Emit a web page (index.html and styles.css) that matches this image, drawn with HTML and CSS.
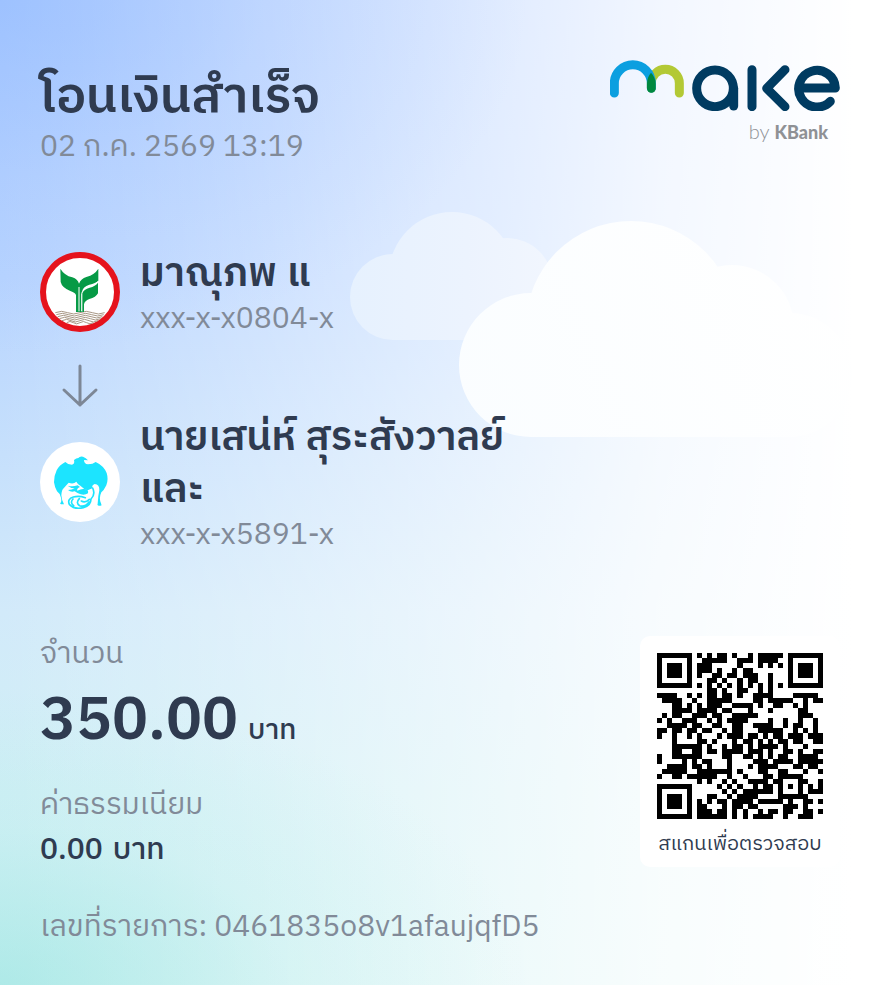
FILE: index.html
```html
<!DOCTYPE html>
<html lang="th">
<head>
<meta charset="utf-8">
<meta name="viewport" content="width=device-width, initial-scale=1">
<title>โอนเงินสำเร็จ</title>
<link rel="stylesheet" href="styles.css">
</head>
<body>
<main class="slip">
  <svg class="clouds" viewBox="0 0 530 240" aria-hidden="true">
    <defs>
      <linearGradient id="far" gradientUnits="userSpaceOnUse" x1="0" y1="0" x2="260" y2="0">
        <stop offset="0" stop-color="#e6f1fe"/><stop offset="0.45" stop-color="#ecf3fe"/><stop offset="0.75" stop-color="#f1f6fe"/><stop offset="1" stop-color="#f8faff" stop-opacity="0"/>
      </linearGradient>
      <linearGradient id="near" gradientUnits="userSpaceOnUse" x1="109" y1="240" x2="510" y2="60">
        <stop offset="0" stop-color="#fafdff"/><stop offset="1" stop-color="#fff"/>
      </linearGradient>
    </defs>
    <g fill="url(#far)">
      <circle cx="43" cy="87" r="43"/>
      <circle cx="102" cy="65" r="63"/>
      <circle cx="157" cy="74" r="46"/>
      <path d="M43 80H240V130H43z"/>
    </g>
    <g fill="url(#near)">
      <circle cx="181" cy="155" r="72"/>
      <circle cx="281" cy="116" r="105"/>
      <circle cx="382" cy="117" r="62"/>
      <circle cx="440" cy="165" r="62"/>
      <path d="M181 110H440V227H181z"/>
    </g>
  </svg>

  <header class="top">
    <div>
      <h1 class="title">โอนเงินสำเร็จ</h1>
      <p class="muted">02 ก.ค. 2569 13:19</p>
    </div>
    <div class="brand">
      <svg class="brand-mark" viewBox="30 28 690 154" role="img" aria-label="make" fill="none" stroke-width="27" stroke-linecap="round" stroke-linejoin="round">
        <path stroke="#b3c935" d="M154 112V98a42 42 0 0 1 84 0V127"/>
        <path stroke="#0b9fe0" d="M43 127V98a55 55 0 0 1 111 0V112"/>
        <path fill="#00883f" d="M153 66c8 9 14 20 14 33v14a13 13 0 0 1-26 0V98c0-13 5-24 12-32z"/>
        <g stroke="#003b61">
          <circle cx="345" cy="113" r="55"/>
          <path d="M401 113V166"/>
          <path d="M456 57V168M555 57L500 113L555 168"/>
          <path d="M600 112H706A55 55 0 1 0 691 152"/>
        </g>
      </svg>
      <p class="brand-by">by <b>KBank</b></p>
    </div>
  </header>

  <section class="party from">
    <svg class="avatar" viewBox="30 33 240 240" role="img" aria-label="KBank">
      <circle cx="150" cy="153" r="111" fill="#fff" stroke="#e5131d" stroke-width="18"/>
      <g fill="none" stroke="#a89886" stroke-width="3">
        <path d="M76 215q19-8 37 0t37 0t37 0t37 0M79 221q18-8 36 0t35 0t35 0t36 0M83 227q17-8 34 0t33 0t33 0t34 0M88 233q16-8 31 0t31 0t31 0t31 0M96 239q14-8 27 0t27 0t27 0t27 0M110 245q10-7 20 0t20 0t20 0t20 0"/>
      </g>
      <g fill="#069a46">
        <path d="M91 83Q103 103 127 109Q143 114 147 128Q153 113 169 108Q194 101 205 83V119Q197 127 178 131Q158 137 157 151V213H138V163Q137 155 121 150Q96 140 92 123Z"/>
        <path d="M204 125V157Q198 169 178 174Q164 179 162 190V213H157V157Q161 145 179 140Q196 136 204 125Z"/>
      </g>
      <path fill="none" stroke="#fff" stroke-width="3" d="M147 138V211M155 211V158Q158 144 176 137Q196 132 205 121"/>
    </svg>
    <div class="who">
      <h2 class="name">มาณุภพ แ</h2>
      <p class="muted">xxx-x-x0804-x</p>
    </div>
  </section>

  <svg class="arrow" viewBox="0 0 80 44" aria-hidden="true"><path d="M40 2V41M24 26L40 41L56 26"/></svg>

  <section class="party to">
    <svg class="avatar" viewBox="30 270 240 240" role="img" aria-label="Krungthai">
      <circle cx="150" cy="390" r="120" fill="#fff"/>
      <g fill="#1ce4ff">
        <path d="M132 324Q139 318 145 318Q149 312 159 314Q168 317 174 325L162 324Q162 336 174 337Q189 337 197 330Q221 341 230 363Q236 382 229 400Q222 415 214 421Q205 440 214 457Q217 463 206 461Q200 460 203 455Q204 432 208 415Q209 397 194 396Q185 399 187 409L173 415Q160 411 152 402Q142 396 139 389Q130 398 116 392Q110 398 101 409Q95 414 94 430Q95 445 102 457L93 457L90 454Q96 450 93 437Q90 424 81 418Q74 406 72 391Q72 371 80 355Q88 339 106 330Q113 338 126 338Q135 336 132 324Z"/>
        <path d="M113 401Q128 405 143 400L150 405Q139 410 142 416Q154 410 162 411Q177 411 174 424Q165 430 152 427Q142 424 134 418Q123 422 114 414Q126 414 134 409Q122 409 113 401Z"/>
      </g>
      <path fill="none" stroke="#1ce4ff" stroke-width="5" stroke-linecap="round" d="M188 408Q197 427 183 441Q183 461 160 467Q132 473 118 457Q111 441 130 435Q147 430 166 437M129 441Q119 452 131 461M148 440Q136 453 149 461Q164 467 177 450M154 447Q166 454 178 442"/>
    </svg>
    <div class="who">
      <h2 class="name">นายเสน่ห์ สุระสังวาลย์ และ</h2>
      <p class="muted">xxx-x-x5891-x</p>
    </div>
  </section>

  <section class="bottom">
    <dl class="amounts">
      <dt class="muted">จำนวน</dt>
      <dd class="total"><span class="total-value">350.00</span> <span class="unit">บาท</span></dd>
      <dt class="muted">ค่าธรรมเนียม</dt>
      <dd class="fee"><span>0.00</span> <span>บาท</span></dd>
    </dl>
    <figure class="verify">
      <svg class="qr" viewBox="0 0 33 33" role="img" aria-label="QR" shape-rendering="crispEdges"><path id="modules"/></svg>
      <figcaption>สแกนเพื่อตรวจสอบ</figcaption>
    </figure>
  </section>

  <p class="muted ref">เลขที่รายการ: 0461835o8v1afaujqfD5</p>
</main>
<script src="qr.js"></script>
</body>
</html>
```
FILE: styles.css
```css
* { box-sizing: border-box; }

body, h1, h2, p, dl, dd, figure { margin: 0; }

body {
  font-family: "IBM Plex Sans Thai", "IBM Plex Sans", "Noto Sans", "Noto Sans Thai", sans-serif;
  color: #2f3b50;
}

.slip {
  position: relative;
  min-height: 100vh;
  padding: 64px 40px 40px;
  background:
    radial-gradient(ellipse 60% 36% at 0 0, rgba(140, 184, 255, 0.5), rgba(150, 190, 255, 0.2) 50%, rgba(160, 200, 255, 0)),
    radial-gradient(ellipse 60% 30% at 0 100%, rgba(150, 228, 224, 0.6), rgba(170, 235, 232, 0.2) 55%, rgba(190, 240, 238, 0)),
    linear-gradient(to right, rgba(255, 255, 255, 0), rgba(255, 255, 255, 0.26) 25%, rgba(255, 255, 255, 0.54) 50%, rgba(255, 255, 255, 0.84) 75%, #fff 97%),
    linear-gradient(#b0ccff, #b8d4ff 28%, #c6e0fc 46%, #d2eafa 62%, #d0eff5 80%, #d2f2f3);
}

.clouds {
  position: absolute;
  top: 210px;
  left: 350px;
  width: 530px;
}

.top, .party, .bottom { position: relative; display: flex; }

.top { justify-content: space-between; align-items: flex-start; }

.title { font-size: 50px; font-weight: 600; line-height: 68px; }

.muted { color: #818a98; font-size: 30px; line-height: 38px; }

.top .muted { line-height: 32px; }

.brand { width: 230px; margin-top: -4px; }

.brand-mark { display: block; width: 100%; }

.brand-by {
  padding: 7px 12px 0 0;
  color: #8f9195;
  font: 300 20px/26px Lato, sans-serif;
  text-align: right;
}

.brand-by b { font-weight: 900; font-size: 18px; }

.party { gap: 20px; align-items: center; }

.from { margin-top: 80px; }

.avatar { flex: none; width: 80px; height: 80px; }

.who { max-width: 400px; padding-top: 4px; }

.name { font-size: 40px; font-weight: 600; line-height: 52px; }

.who .muted { line-height: 40px; }

.arrow {
  position: relative;
  display: block;
  width: 80px;
  height: 44px;
  margin: 24px 0 0;
  fill: none;
  stroke: #7d8796;
  stroke-width: 3;
  stroke-linecap: round;
  stroke-linejoin: round;
}

.bottom { justify-content: space-between; align-items: flex-start; margin-top: 80px; }

.total { display: flex; align-items: baseline; gap: 10px; line-height: 96px; }

.total-value { font-size: 60px; font-weight: 600; }

.unit { font-size: 28px; font-weight: 500; }

.amounts .total + .muted { margin-top: 8px; }

.fee { display: flex; gap: 10px; font-size: 30px; font-weight: 500; line-height: 52px; }

.verify {
  width: 200px;
  padding: 17px 17px 8px;
  border-radius: 10px;
  background: #fff;
  text-align: center;
}

.qr { display: block; width: 100%; }

.verify figcaption { margin-top: 12px; font-size: 20px; line-height: 28px; white-space: nowrap; }

.ref { position: relative; margin-top: 32px; }
```
FILE: qr.js
```js
// Each string is one row of modules; '#' is a dark module.
const rows = [
  '#######.#.#.##.#..#.#####.#######',
  '#.....#..#####..###.####..#.....#',
  '#.###.#.###.....#...#.#.#.#.###.#',
  '#.###.#.###.#..#.##.......#.###.#',
  '#.###.#.#..##.##.###..#...#.###.#',
  '#.....#...##.#..#.##..#...#.....#',
  '#######.#.#.#.#.#.#.#.#.#.#######',
  '..........##.#..##..#.#..........',
  '####..#.#.##.##.#..####....#####.',
  '.####..#..#####....##.#####..#.##',
  '...##.#.#.###..####.#..##..#.#...',
  '...####.####.##...#...#.....##...',
  '.#.##..###.##..#####........###..',
  '#.#..###..#.#.####....#..#..#..#.',
  '..####.##..##..##..####..#.##..#.',
  '##.##.##.##..#.##...#####..#.#.#.',
  '#..#..#.#...#.###.##.#.##.###.###',
  '...#....##.#...#.##.#.#.##.##..##',
  '...######.#..#.##.#.####.#...#...',
  '...##..##.##.####.###.#..##.#..##',
  '#..######....##..##.#.#.##..####.',
  '#....#.#.##...#....###.####.#####',
  '..####.##.#...#...#.####...##.##.',
  '.#####..#######.#...##..##...#..#',
  '#..##.######..#..#...##.#####....',
  '........#.#..#.#..####.##...##..#',
  '#######.....#.#.#..#.##.#.#.#.#.#',
  '#.....#......#.#.######.#...#.###',
  '#.###.#...##..#.####....######...',
  '#.###.#.#.#.##.####.#####.#..##.#',
  '#.###.#.##...#.##.##.....###.#...',
  '#.....#.###.##.#.#..#.##.##..##.#',
  '#######.######.#.#.####..#..###..',
];

document.getElementById('modules').setAttribute('d', rows.map((row, y) =>
  [...row].map((cell, x) => (cell === '#' ? `M${x} ${y}h1v1h-1z` : '')).join('')
).join(''));
```
